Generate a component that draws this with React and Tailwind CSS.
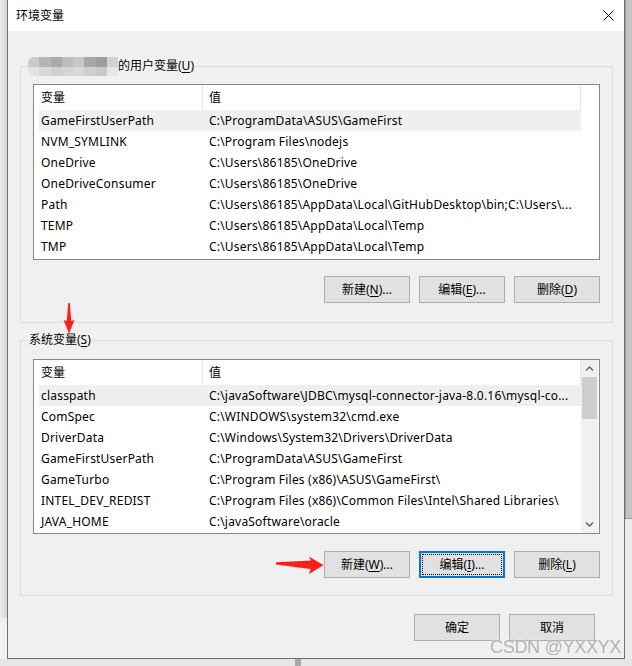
import React from 'react';

const userVars = [
  ['GameFirstUserPath', 'C:\\ProgramData\\ASUS\\GameFirst'],
  ['NVM_SYMLINK', 'C:\\Program Files\\nodejs'],
  ['OneDrive', 'C:\\Users\\86185\\OneDrive'],
  ['OneDriveConsumer', 'C:\\Users\\86185\\OneDrive'],
  ['Path', 'C:\\Users\\86185\\AppData\\Local\\GitHubDesktop\\bin;C:\\Users\\...'],
  ['TEMP', 'C:\\Users\\86185\\AppData\\Local\\Temp'],
  ['TMP', 'C:\\Users\\86185\\AppData\\Local\\Temp'],
];

const sysVars = [
  ['classpath', 'C:\\javaSoftware\\JDBC\\mysql-connector-java-8.0.16\\mysql-co...'],
  ['ComSpec', 'C:\\WINDOWS\\system32\\cmd.exe'],
  ['DriverData', 'C:\\Windows\\System32\\Drivers\\DriverData'],
  ['GameFirstUserPath', 'C:\\ProgramData\\ASUS\\GameFirst'],
  ['GameTurbo', 'C:\\Program Files (x86)\\ASUS\\GameFirst\\'],
  ['INTEL_DEV_REDIST', 'C:\\Program Files (x86)\\Common Files\\Intel\\Shared Libraries\\'],
  ['JAVA_HOME', 'C:\\javaSoftware\\oracle'],
];

// blurred user name
const mosaicTop = ['bg-[#cbcbcb]', 'bg-[#b5b5b5]', 'bg-[#a9a9a9]', 'bg-[#bdbdbd]', 'bg-[#c7c7c7]', 'bg-[#a6a6a6]', 'bg-[#9c9c9c]', 'bg-[#d2d2d2]'];
const mosaicBottom = ['bg-[#e2e2e2]', 'bg-[#d8d8d8]', 'bg-[#d0d0d0]', 'bg-[#d5d5d5]', 'bg-[#d9d9d9]', 'bg-[#cfcfcf]', 'bg-[#c9c9c9]', 'bg-[#e6e6e6]'];

function Chevron({ up }) {
  return (
    <svg width="9" height="9" viewBox="0 0 9 9">
      <path d={up ? 'M1 6.5 L4.5 3 L8 6.5' : 'M1 2.5 L4.5 6 L8 2.5'} fill="none" stroke="#606060" strokeWidth="1.4" />
    </svg>
  );
}

function ListView({ rows, height, scrollbar }) {
  return (
    <div className={`${height} border border-[#828790] bg-white flex overflow-hidden`}>
      <div className="w-[547px] flex flex-col">
        <div className="flex h-[25px] shrink-0">
          <div className="w-[169px] pl-[7px] flex items-center border-r border-[#e5e5e5]">变量</div>
          <div className="flex-1 pl-[6px] flex items-center border-r border-[#e5e5e5]">值</div>
        </div>
        {rows.map(([name, value], i) => (
          <div
            key={name + i}
            className={`flex h-[21px] shrink-0 items-center ml-[5px] w-[542px] whitespace-nowrap tracking-[0.2px] ${i === 0 ? 'bg-[#efefef]' : ''}`}
          >
            <div className="w-[164px] pl-[2px] overflow-hidden">{name}</div>
            <div className="flex-1 pl-[6px] overflow-hidden">{value}</div>
          </div>
        ))}
      </div>
      {scrollbar && (
        <div className="w-[17px] bg-[#f0f0f0] flex flex-col">
          <div className="h-[17px] flex items-center justify-center"><Chevron up /></div>
          <div className="flex-1">
            <div className="h-[42px] mx-[1px] bg-[#cdcdcd]" />
          </div>
          <div className="h-[17px] flex items-center justify-center"><Chevron /></div>
        </div>
      )}
    </div>
  );
}

function Btn({ pre, k, post, focused }) {
  const label = (
    <span>
      {pre}
      {k && <span className="underline underline-offset-2">{k}</span>}
      {post}
    </span>
  );
  if (focused) {
    return (
      <button className="w-[86px] h-[27px] bg-[#e1e1e1] border-2 border-[#0078d7] p-px">
        <div className="h-full border border-dotted border-black flex items-center justify-center">{label}</div>
      </button>
    );
  }
  return (
    <button className="w-[86px] h-[27px] bg-[#e1e1e1] border border-[#adadad] flex items-center justify-center">
      {label}
    </button>
  );
}

export default function App() {
  return (
    <div className="w-[632px] h-[666px] bg-[#e9e9e9] flex flex-col overflow-hidden relative text-[12px] text-black font-['Noto_Sans','Noto_Sans_CJK_SC',sans-serif]">
      <div className="flex h-[659px] shrink-0">
        {/* desktop edge left */}
        <div className="w-[7px] flex flex-col">
          <div className="h-[618px] bg-gradient-to-r from-[#ececec] to-[#d4d4d4]" />
          <div className="flex-1 bg-[#f0f0f0]" />
        </div>

        <div className="w-[618px] border-x border-b border-[#707070] flex flex-col">
          <div className="h-[31px] bg-white flex items-center justify-between pl-[8px] pr-[10px]">
            <span>环境变量</span>
            <svg width="11" height="11" viewBox="0 0 11 11">
              <path d="M0.5 0.5 L10.5 10.5 M10.5 0.5 L0.5 10.5" stroke="#000" strokeWidth="1" />
            </svg>
          </div>

          <div className="flex-1 bg-[#f0f0f0] pl-[12px] pr-[11px] flex flex-col">
            <fieldset className="mt-[27px] border border-[#dcdcdc] p-0 m-0">
              <legend className="ml-[7px] h-[16px] leading-[16px] flex items-center">
                <div className="w-[90px] h-[19px] -my-[1px] grid grid-cols-8 rounded-l-[6px] overflow-hidden">
                  {mosaicTop.map((c, i) => <div key={'t' + i} className={`h-[10px] ${c}`} />)}
                  {mosaicBottom.map((c, i) => <div key={'b' + i} className={`h-[9px] ${c}`} />)}
                </div>
                <span className="pr-[1px]">的用户变量(<span className="underline underline-offset-2">U</span>)</span>
              </legend>
              <div className="px-[12px] pt-[10px] pb-[19px]">
                <ListView rows={userVars} height="h-[176px]" />
                <div className="mt-[16px] flex justify-end gap-[9px]">
                  <Btn pre="新建(" k="N" post=")..." />
                  <Btn pre="编辑(" k="E" post=")..." />
                  <Btn pre="删除(" k="D" post=")" />
                </div>
              </div>
            </fieldset>

            <fieldset className="mt-[9px] border border-[#dcdcdc] p-0 m-0">
              <legend className="ml-[7px] px-[1px] h-[16px] leading-[16px]">
                系统变量(<span className="underline underline-offset-2">S</span>)
              </legend>
              <div className="px-[12px] pt-[11px] pb-[17px]">
                <ListView rows={sysVars} height="h-[175px]" scrollbar />
                <div className="mt-[17px] flex justify-end gap-[9px]">
                  <Btn pre="新建(" k="W" post=")..." />
                  <Btn pre="编辑(" k="I" post=")..." focused />
                  <Btn pre="删除(" k="L" post=")" />
                </div>
              </div>
            </fieldset>

            <div className="mt-[18px] flex justify-end gap-[9px] pr-[18px]">
              <Btn pre="确定" />
              <Btn pre="取消" />
            </div>
          </div>
        </div>

        {/* desktop edge right */}
        <div className="flex-1 flex flex-col">
          <div className="h-[518px] bg-[#c4c4c4] border-l border-[#9a9a9a]" />
          <div className="flex-1 bg-[#ececec] border-t border-[#9a9a9a]" />
        </div>
      </div>

      <div className="flex-1 flex">
        <div className="w-[295px] bg-[#e6e6e6]" />
        <div className="w-[6px] bg-[#a9a9a9]" />
        <div className="flex-1 bg-[#e6e6e6]" />
      </div>

      {/* red annotation arrows */}
      <svg className="absolute left-0 top-0 pointer-events-none" width="632" height="666">
        <path d="M68.2 303 L69.8 303 L71.3 321 L74.5 320 L69 333.5 L63.5 320 L66.7 321 Z" fill="#fb1f1a" />
        <path d="M276 562.2 L311 560.5 L308.5 556.5 L323.5 565 L309 574 L310.5 569 L276 564.6 Z" fill="#fb1f1a" />
      </svg>

      <div className="absolute left-[490px] top-[636px] text-[18px] leading-[22px] tracking-[-0.3px] text-[#b2b2b2] font-['Liberation_Sans',sans-serif] [text-shadow:0_0_2px_#ffffff]">
        CSDN @YXXYX
      </div>
    </div>
  );
}
